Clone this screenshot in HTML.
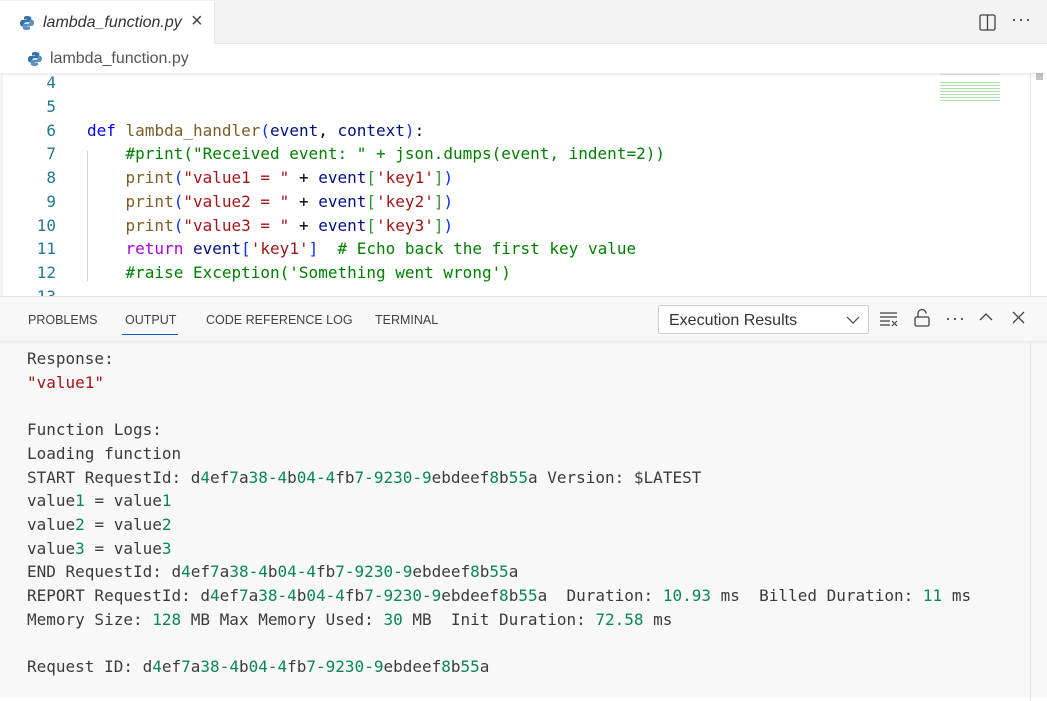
<!DOCTYPE html>
<html><head><meta charset="utf-8"><style>
*{margin:0;padding:0;box-sizing:border-box}
body{width:1047px;height:698px;overflow:hidden;background:#fff;font-family:"Liberation Sans",sans-serif;position:relative}
.mono{font-family:"DejaVu Sans Mono","Liberation Mono",monospace;font-size:16px;white-space:pre}
#tabs{position:absolute;left:0;top:0;width:1047px;height:44px;background:#f3f3f3;border-bottom:1px solid #e5e5e5}
#tab{position:absolute;left:0;top:0;width:215px;height:45px;background:#fff;border-top:1px solid #eee;border-right:1px solid #e5e5e5}
#tab .t{position:absolute;left:43px;top:13px;font-style:italic;font-size:16px;color:#333}
#tab .x{position:absolute;left:191px;top:9px;font-size:20px;color:#444}
#bc{position:absolute;left:0;top:44px;width:1047px;height:29px;background:#fff;box-shadow:0 3px 4px -2px rgba(0,0,0,.12);z-index:2}
#bc .t{position:absolute;left:50px;top:6px;font-size:16px;color:#555}
.py{position:absolute}
#editor{position:absolute;left:0;top:72px;width:1047px;height:224px;background:#fff;overflow:hidden}
.ln{position:absolute;left:0;width:56px;text-align:right;color:#237893}
.cl{position:absolute;left:87px}
.guide{position:absolute;left:87px;top:79px;width:1px;height:130px;background:#d3d3d3}
.kw{color:#0000ff}.fn{color:#795e26}.pa{color:#001080}.st{color:#a31515}.cm{color:#008000}.rt{color:#af00db}.b1{color:#0431fa}.b2{color:#319331}
#panel{position:absolute;left:0;top:296px;width:1047px;height:402px;background:#f8f8f8;border-top:1px solid #e5e5e5}
.pt{position:absolute;top:16px;font-size:12.5px;color:#424242}
#sel{position:absolute;left:658px;top:8px;width:211px;height:29px;border:1px solid #cecece;background:#fff;border-radius:2px}
#sel span{position:absolute;left:10px;top:6px;font-size:16px;color:#333}
.out{position:absolute;left:27px;color:#3b3b3b}
.out.st{color:#a31515}
.g{color:#098658}
</style></head><body>
<div id="tabs">
 <div id="tab">
  <svg class="py" style="left:19px;top:14px" width="16" height="16" viewBox="0 0 16 16"><path d="M8 1C5 1 5 2.3 5 3v1.5h3.2V5H3.5C2 5 1 6.3 1 8.2s1 3.2 2.5 3.2H5V9.5c0-1.3 1-2.3 2.3-2.3h3.2c1 0 1.8-.8 1.8-1.8V3c0-1.200-1.6-2-4.3-2z" fill="#3572a5"/><path d="M8 15c3 0 3-1.3 3-2v-1.5H7.8V11h4.7c1.5 0 2.5-1.3 2.5-3.2s-1-3.2-2.5-3.2H11v1.9c0 1.3-1 2.3-2.3 2.3H5.5c-1 0-1.8.8-1.8 1.8V13c0 1.2 1.6 2 4.3 2z" fill="#5a93c2"/></svg>
  <div class="t">lambda_function.py</div><div class="x">×</div>
 </div>
 <svg style="position:absolute;left:979px;top:14px" width="17" height="17" viewBox="0 0 17 17"><rect x="1" y="1" width="15" height="15" rx="1.5" fill="none" stroke="#424242" stroke-width="1.3"/><line x1="8.5" y1="1" x2="8.5" y2="16" stroke="#424242" stroke-width="1.3"/></svg>
 <div style="position:absolute;left:1011px;top:9px;font-size:18px;color:#424242;letter-spacing:1px">···</div>
</div>
<div id="bc">
 <svg class="py" style="left:27px;top:7px" width="16" height="16" viewBox="0 0 16 16"><path d="M8 1C5 1 5 2.3 5 3v1.5h3.2V5H3.5C2 5 1 6.3 1 8.2s1 3.2 2.5 3.2H5V9.5c0-1.3 1-2.3 2.3-2.3h3.2c1 0 1.8-.8 1.8-1.8V3c0-1.2-1.6-2-4.3-2z" fill="#3572a5"/><path d="M8 15c3 0 3-1.3 3-2v-1.5H7.8V11h4.7c1.5 0 2.5-1.3 2.5-3.2s-1-3.2-2.5-3.2H11v1.9c0 1.3-1 2.3-2.3 2.3H5.5c-1 0-1.8.8-1.8 1.8V13c0 1.2 1.6 2 4.3 2z" fill="#5a93c2"/></svg>
 <div class="t">lambda_function.py</div>
</div>
<div id="editor" class="mono">
 <div style="position:absolute;left:0;top:0;width:3px;height:226px;background:#f3f3f3"></div>
 <div class="guide"></div>
 <div style="position:absolute;left:1030px;top:0;width:1px;height:226px;background:#e5e5e5"></div>
 <div style="position:absolute;left:1036px;top:0;width:7px;height:8px;background:#c4c4c4"></div>
 <div style="position:absolute;left:940px;top:2px;width:60px;height:1px;background:#ddd"></div>
 <div style="position:absolute;left:940px;top:10px;width:60px;height:20px;opacity:.6;background:repeating-linear-gradient(#7c7 0 1px,transparent 1px 3px)"></div>
 <div class="ln" style="top:1px">4</div>
 <div class="ln" style="top:25px">5</div>
 <div class="ln" style="top:49px">6</div><div class="cl" style="top:49px"><span class="kw">def</span> <span class="fn">lambda_handler</span><span class="b1">(</span><span class="pa">event</span>, <span class="pa">context</span><span class="b1">)</span>:</div>
 <div class="ln" style="top:72px">7</div><div class="cl cm" style="top:72px">    #print("Received event: " + json.dumps(event, indent=2))</div>
 <div class="ln" style="top:96px">8</div><div class="cl" style="top:96px">    <span class="fn">print</span><span class="b1">(</span><span class="st">"value1 = "</span> + <span class="pa">event</span><span class="b2">[</span><span class="st">'key1'</span><span class="b2">]</span><span class="b1">)</span></div>
 <div class="ln" style="top:120px">9</div><div class="cl" style="top:120px">    <span class="fn">print</span><span class="b1">(</span><span class="st">"value2 = "</span> + <span class="pa">event</span><span class="b2">[</span><span class="st">'key2'</span><span class="b2">]</span><span class="b1">)</span></div>
 <div class="ln" style="top:144px">10</div><div class="cl" style="top:144px">    <span class="fn">print</span><span class="b1">(</span><span class="st">"value3 = "</span> + <span class="pa">event</span><span class="b2">[</span><span class="st">'key3'</span><span class="b2">]</span><span class="b1">)</span></div>
 <div class="ln" style="top:167px">11</div><div class="cl" style="top:167px">    <span class="rt">return</span> <span class="pa">event</span><span class="b1">[</span><span class="st">'key1'</span><span class="b1">]</span>  <span class="cm"># Echo back the first key value</span></div>
 <div class="ln" style="top:191px">12</div><div class="cl cm" style="top:191px">    #raise Exception('Something went wrong')</div>
 <div class="ln" style="top:215px">13</div>
</div>
<div id="panel">
 <div class="pt" style="left:28px">PROBLEMS</div>
 <div class="pt" style="left:125px">OUTPUT</div>
 <div style="position:absolute;left:122px;top:37px;width:56px;height:1px;background:#005fb8"></div>
 <div class="pt" style="left:206px">CODE REFERENCE LOG</div>
 <div class="pt" style="left:375px">TERMINAL</div>
 <div id="sel"><span>Execution Results</span>
  <svg style="position:absolute;left:187px;top:9px" width="14" height="10" viewBox="0 0 14 10"><path d="M1 2l6 6 6-6" fill="none" stroke="#424242" stroke-width="1.2"/></svg></div>
 <svg style="position:absolute;left:879px;top:14px" width="20" height="16" viewBox="0 0 20 16"><path d="M1 2h17M1 6h17M1 10h10M1 14h10M13 10l5 5M18 10l-5 5" stroke="#424242" stroke-width="1.2" fill="none"/></svg>
 <svg style="position:absolute;left:913px;top:11px" width="18" height="20" viewBox="0 0 18 20"><rect x="2" y="9" width="14" height="9" rx="1.5" fill="none" stroke="#424242" stroke-width="1.3"/><path d="M5 9V5.5a4 4 0 0 1 8 0" fill="none" stroke="#424242" stroke-width="1.3"/></svg>
 <div style="position:absolute;left:945px;top:11px;font-size:18px;color:#424242;letter-spacing:1px">···</div>
 <svg style="position:absolute;left:979px;top:15px" width="14" height="10" viewBox="0 0 14 10"><path d="M1 8l6-6 6 6" fill="none" stroke="#424242" stroke-width="1.3"/></svg>
 <svg style="position:absolute;left:1012px;top:14px" width="13" height="13" viewBox="0 0 13 13"><path d="M1 1l11 11M12 1L1 12" stroke="#424242" stroke-width="1.3"/></svg>
 <div style="position:absolute;left:0;top:44px;width:1047px;height:4px;background:linear-gradient(rgba(0,0,0,.06),transparent)"></div>
 <div style="position:absolute;left:1030px;top:44px;width:1px;height:360px;background:#e5e5e5"></div>
 <div class="mono">
 <div class="out" style="top:52px">Response:</div>
 <div class="out st" style="top:76px">"value1"</div>
 <div class="out" style="top:123px">Function Logs:</div>
 <div class="out" style="top:147px">Loading function</div>
 <div class="out" style="top:171px">START RequestId: d<span class="g">4</span>ef<span class="g">7</span>a<span class="g">38-4</span>b<span class="g">04-4</span>fb<span class="g">7-9230-9</span>ebdeef<span class="g">8</span>b<span class="g">55</span>a Version: $LATEST</div>
 <div class="out" style="top:194px">value<span class="g">1</span> = value<span class="g">1</span></div>
 <div class="out" style="top:218px">value<span class="g">2</span> = value<span class="g">2</span></div>
 <div class="out" style="top:242px">value<span class="g">3</span> = value<span class="g">3</span></div>
 <div class="out" style="top:265px">END RequestId: d<span class="g">4</span>ef<span class="g">7</span>a<span class="g">38-4</span>b<span class="g">04-4</span>fb<span class="g">7-9230-9</span>ebdeef<span class="g">8</span>b<span class="g">55</span>a</div>
 <div class="out" style="top:289px">REPORT RequestId: d<span class="g">4</span>ef<span class="g">7</span>a<span class="g">38-4</span>b<span class="g">04-4</span>fb<span class="g">7-9230-9</span>ebdeef<span class="g">8</span>b<span class="g">55</span>a  Duration: <span class="g">10.93</span> ms  Billed Duration: <span class="g">11</span> ms</div>
 <div class="out" style="top:313px">Memory Size: <span class="g">128</span> MB Max Memory Used: <span class="g">30</span> MB  Init Duration: <span class="g">72.58</span> ms</div>
 <div class="out" style="top:360px">Request ID: d<span class="g">4</span>ef<span class="g">7</span>a<span class="g">38-4</span>b<span class="g">04-4</span>fb<span class="g">7-9230-9</span>ebdeef<span class="g">8</span>b<span class="g">55</span>a</div>
 </div>
</div>
</body></html>
